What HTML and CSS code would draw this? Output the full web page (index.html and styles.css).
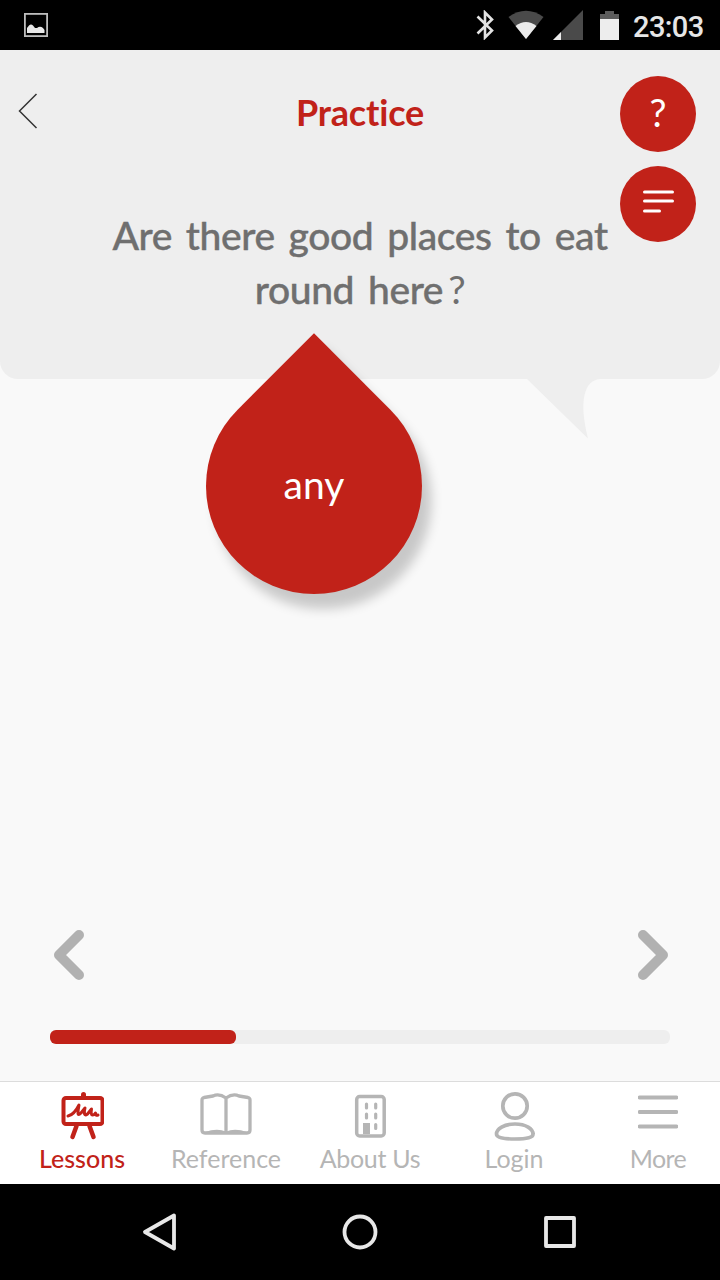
FILE: index.html
```html
<!DOCTYPE html>
<html lang="en">
<head>
    <meta charset="UTF-8">
    <meta name="viewport" content="width=device-width, initial-scale=1.0">
    <title>Practice</title>
    <link rel="stylesheet" href="styles.css">
</head>
<body>

    <div class="screen">
        <!-- Status bar -->
        <div class="status-bar">
            <svg class="status-picture" width="24" height="24" viewBox="0 0 24 24">
                <rect x="0.9" y="0.9" width="22.2" height="22.2" fill="none" stroke="#bdbdbd" stroke-width="1.8"/>
                <path d="M3 20v-5l2-2.500q2-2 4 0l2 2.500h2q3-2.500 6 0l1.500 2v3z" fill="#e8e8e8"/>
            </svg>
            <svg width="18" height="30" viewBox="0 0 18 30">
                <path d="M1.500 6.500L16 20.500 9 27.500V2.500L16 9.500 1.500 23.500" fill="none" stroke="#e4e4e4" stroke-width="2.600"/>
            </svg>
            <svg class="status-wifi" width="36" height="30" viewBox="0 0 36 30">
                <path d="M0.500 7Q18-5.500 35.500 7L18 29z" fill="#4a4a4a"/>
                <path d="M7.500 16Q18 8 28.500 16L18 29z" fill="#ebebeb"/>
            </svg>
            <svg class="status-signal" width="30" height="30" viewBox="0 0 30 30">
                <path d="M30 0V30H0z" fill="#4a4a4a"/>
                <path d="M8 22V30H0z" fill="#ebebeb"/>
            </svg>
            <svg class="status-battery" width="19" height="29" viewBox="0 0 19 29">
                <path d="M0 3h5V0h9v3h5v6H0z" fill="#5c5c5c"/>
                <path d="M0 8h19v21H0z" fill="#ededed"/>
            </svg>
            <span class="clock">23:03</span>
        </div>

        <!-- Question bubble -->
        <div class="bubble">
            <div class="header">
                <svg class="back" width="20" height="36" viewBox="0 0 20 36">
                    <path d="M18.500 1L1.500 18l17 17" fill="none" stroke="#333" stroke-width="1.500"/>
                </svg>
                <h1>Practice</h1>
            </div>
            <p class="question">Are there good places to eat<br>round here<span class="mark">?</span></p>
            <svg class="bubble-tail" width="74" height="60" viewBox="0 0 74 60">
                <path d="M0 0H73Q61 1 57.500 16Q54 32 61 59.500z" fill="#eee"/>
            </svg>
            <div class="side-buttons">
                <div class="round-button">?</div>
                <div class="round-button">
                    <svg width="32" height="24" viewBox="0 0 32 24">
                        <path d="M2.500 2h28M2.500 11h28M2.500 21h15" stroke="#fff" stroke-width="3" stroke-linecap="round"/>
                    </svg>
                </div>
            </div>
            <div class="drop">
                <span>any</span>
            </div>
        </div>

        <!-- Practice controls -->
        <div class="controls">
            <div class="arrows">
                <svg width="32" height="52" viewBox="0 0 32 52">
                    <path d="M27 6L7 26l20 20" fill="none" stroke="#b1b1b1" stroke-width="10" stroke-linecap="round" stroke-linejoin="round"/>
                </svg>
                <svg width="32" height="52" viewBox="0 0 32 52">
                    <path d="M6 6L26 26 6 46" fill="none" stroke="#b1b1b1" stroke-width="10" stroke-linecap="round" stroke-linejoin="round"/>
                </svg>
            </div>
            <div class="progress">
                <div class="progress-fill" style="width: 30%"></div>
            </div>
        </div>

        <!-- Tabs -->
        <div class="tabs">
            <div class="tab active">
                <svg width="44" height="50" viewBox="0 0 44 50" fill="none" stroke="currentColor" stroke-linecap="round" stroke-linejoin="round">
                    <rect x="3.500" y="7" width="39" height="26" rx="2.500" stroke-width="4"/>
                    <path d="M23.500 3.500v3" stroke-width="5"/>
                    <path d="M16.500 35l-4 11M29.500 35l4 11" stroke-width="4.500"/>
                    <path d="M8 25q6-1 11-11q-1 5-1 8q0 3 3 0l4-5q-1 3-.5 6q.5 2 3 0l4-5q-1 6 1 6q2 0 3-2q0 3 2.500 2" stroke-width="3"/>
                </svg>
                <span>Lessons</span>
            </div>
            <div class="tab">
                <svg width="54" height="50" viewBox="0 0 54 50" fill="none" stroke="currentColor" stroke-width="3.300" stroke-linejoin="round">
                    <path d="M27 7Q20 2 14 5L5 6.500Q3 7 3 9V39Q3 42 6 42H48Q51 42 51 39V9Q51 7 49 6.500L40 5Q34 2 27 7V42"/>
                    <path d="M6 42Q18 37.500 27 41.500Q36 37.500 48 42z" fill="currentColor" stroke-width="1.500"/>
                </svg>
                <span>Reference</span>
            </div>
            <div class="tab">
                <svg width="32" height="50" viewBox="0 0 32 50">
                    <rect x="2.700" y="5.500" width="27.500" height="39.500" rx="3" fill="none" stroke="currentColor" stroke-width="3.500"/>
                    <path d="M12.500 13v4M21.700 13v4M12.500 23v4M21.700 23v4M21.700 33.500v4" stroke="currentColor" stroke-width="3.200" stroke-linecap="round"/>
                    <path d="M9 32h7v11H9z" fill="currentColor"/>
                </svg>
                <span class="label-about">About Us</span>
            </div>
            <div class="tab">
                <svg width="42" height="50" viewBox="0 0 42 50" fill="none" stroke="currentColor" stroke-width="3.700">
                    <circle cx="22" cy="15" r="12.200"/>
                    <path d="M22 33C11 33 3.500 38 3.500 43Q3.500 48 22 48T40 43C40 38 33 33 22 33z"/>
                </svg>
                <span>Login</span>
            </div>
            <div class="tab">
                <svg width="40" height="50" viewBox="0 0 40 50">
                    <path d="M1.500 6.500h37M1.500 21h37M1.500 35.500h37" stroke="currentColor" stroke-width="3.800" stroke-linecap="round"/>
                </svg>
                <span class="label-more">More</span>
            </div>
        </div>

        <!-- Android navigation -->
        <div class="android-nav">
            <svg width="40" height="40" viewBox="0 0 40 40">
                <path d="M34 3.500L5 20l29 16.500z"/>
            </svg>
            <svg width="40" height="40" viewBox="0 0 40 40">
                <circle cx="20" cy="20" r="15.500"/>
            </svg>
            <svg width="40" height="40" viewBox="0 0 40 40">
                <path d="M6 6h28v28H6z"/>
            </svg>
        </div>
    </div>

</body>
</html>
```
FILE: styles.css
```css
* {
    box-sizing: border-box;
}

body {
    margin: 0;
    font-family: Lato, "Liberation Sans", sans-serif;
    background: #f9f9f9;
}

svg {
    display: block;
    flex: none;
}

.screen {
    display: flex;
    flex-direction: column;
    width: 720px;
    height: 1280px;
    overflow: hidden;
}

/* Status bar */
.status-bar {
    display: flex;
    align-items: center;
    height: 50px;
    padding: 0 16px 0 24px;
    background: #000;
}

.status-picture {
    margin-right: auto;
}

.status-wifi {
    margin-left: 14px;
}

.status-signal {
    margin-left: 9px;
}

.status-battery {
    margin-left: 17px;
}

.clock {
    width: 71px;
    margin-left: 14px;
    font-family: Roboto, sans-serif;
    font-size: 29px;
    font-weight: 500;
    line-height: 50px;
    letter-spacing: -0.6px;
    white-space: nowrap;
    color: #e6e6e6;
    padding-top: 3px;
}

/* Question bubble */
.bubble {
    position: relative;
    height: 329px;
    background: #eee;
    border-radius: 0 0 18px 18px;
}

.header {
    display: flex;
    align-items: center;
    height: 124px;
    padding-left: 18px;
}

.back {
    margin-bottom: 2px;
}

h1 {
    flex: 1;
    margin: 0 38px 0 0;
    font-size: 36px;
    letter-spacing: -0.2px;
    text-align: center;
    color: #c12219;
}

.question {
    margin: 34px 0 0;
    font-size: 39px;
    font-weight: 500;
    line-height: 54px;
    letter-spacing: -0.4px;
    word-spacing: 4.5px;
    text-align: center;
    white-space: nowrap;
    color: #6f6f6f;
    -webkit-text-stroke: 0.4px #6f6f6f;
}

.mark {
    margin-left: 5px;
    font-weight: 400;
    -webkit-text-stroke: 0;
}

.bubble-tail {
    position: absolute;
    left: 527px;
    top: 329px;
}

.side-buttons {
    position: absolute;
    top: 26px;
    right: 24px;
    display: flex;
    flex-direction: column;
    gap: 14px;
}

.round-button {
    display: flex;
    align-items: center;
    justify-content: center;
    width: 76px;
    height: 76px;
    padding-bottom: 4px;
    border-radius: 50%;
    background: #c12219;
    color: #fff;
    font-size: 38px;
}

/* Draggable answer */
.drop {
    position: absolute;
    left: 206px;
    top: 328px;
    display: flex;
    align-items: center;
    justify-content: center;
    width: 216px;
    height: 216px;
    border-radius: 0 50% 50% 50%;
    background: #c12219;
    box-shadow: 17px 4px 12px rgba(0, 0, 0, 0.2);
    color: #fff;
    font-size: 39px;
    transform: rotate(45deg);
}

.drop span {
    padding-bottom: 5px;
    transform: rotate(-45deg);
}

/* Arrows and progress */
.controls {
    flex: 1;
    display: flex;
    flex-direction: column;
    justify-content: flex-end;
    padding: 0 50px 37px;
}

.arrows {
    display: flex;
    justify-content: space-between;
    padding: 0 1px 0 2px;
    margin-bottom: 49px;
}

.progress {
    height: 14px;
    border-radius: 6px;
    background: #eee;
}

.progress-fill {
    height: 100%;
    border-radius: 6px;
    background: #c12219;
}

/* Tabs */
.tabs {
    display: flex;
    height: 103px;
    padding-left: 10px;
    border-top: 1px solid #dcdcdc;
    background: #fff;
}

.tab {
    display: flex;
    flex: none;
    flex-direction: column;
    align-items: center;
    width: 144px;
    padding-top: 9px;
    color: #b5b5b5;
    font-size: 25px;
    line-height: 35px;
    white-space: nowrap;
}

.active {
    color: #c12219;
    font-weight: 500;
}

.label-about {
    letter-spacing: -0.3px;
}

.label-more {
    letter-spacing: -0.6px;
}

/* Android navigation */
.android-nav {
    display: flex;
    align-items: center;
    justify-content: center;
    gap: 160px;
    height: 96px;
    background: #000;
}

.android-nav svg {
    fill: none;
    stroke: #e8e8e8;
    stroke-width: 3.8;
    stroke-linejoin: round;
}
```
